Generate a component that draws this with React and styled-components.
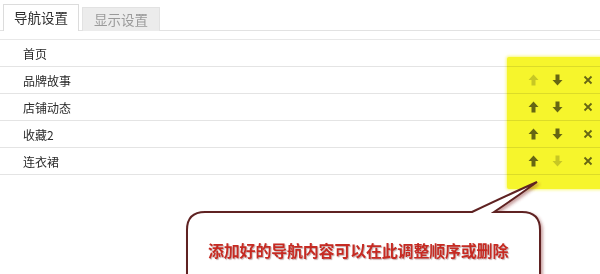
import styled, { createGlobalStyle } from "styled-components";

const GlobalStyle = createGlobalStyle`
  body {
    margin: 0;
    background: #fff;
    font-family: "Noto Sans CJK SC", "Noto Sans", sans-serif;
  }
`;

const Page = styled.div`
  position: relative;
  width: 600px;
  height: 274px;
  overflow: hidden;
  background: #fff;
`;

const TabBar = styled.div`
  display: flex;
  align-items: flex-end;
  gap: 3px;
  height: 30px;
  padding-left: 3px;
  border-bottom: 1px solid #e2e2e2;
`;

const Tab = styled.div`
  width: ${(p) => (p.$active ? "76px" : "78px")};
  height: ${(p) => (p.$active ? "27px" : "24px")};
  box-sizing: border-box;
  display: flex;
  align-items: center;
  justify-content: center;
  font-size: 13.5px;
  color: ${(p) => (p.$active ? "#2e2e2e" : "#9a9a9a")};
  background: ${(p) => (p.$active ? "#fff" : "#ececec")};
  border: 1px solid ${(p) => (p.$active ? "#dcdcdc" : "#e2e2e2")};
  border-bottom: none;
  margin-bottom: -1px;
  padding-bottom: 2px;
`;

const SubLine = styled.div`
  height: 1px;
  margin-top: 8px;
  background: #e8e8e8;
`;

const List = styled.div`
  display: flex;
  flex-direction: column;
`;

const Row = styled.div`
  display: flex;
  align-items: center;
  height: 26px;
  border-bottom: 1px solid #e4e4e4;
  font-size: 12px;
  color: #2a2a2a;
`;

const Label = styled.div`
  flex: 1;
  padding-left: 23px;
`;

const Actions = styled.div`
  display: grid;
  grid-template-columns: 24px 24px 31px;
  justify-items: center;
  align-items: center;
`;

const Icon = styled.svg`
  width: ${(p) => p.$w || 11}px;
  height: 12px;
  fill: ${(p) => (p.$faded ? "#cfcfcf" : "#6a6a6a")};
  stroke: ${(p) => (p.$faded ? "#cfcfcf" : "#6a6a6a")};
`;

const CloseIcon = styled(Icon)`
  justify-self: end;
  margin-right: 7px;
`;

const Highlight = styled.div`
  position: absolute;
  left: 507px;
  top: 57px;
  width: 100px;
  height: 132px;
  background: #f6f52c;
  mix-blend-mode: multiply;
  box-shadow: 0 0 3px 1px rgba(246, 245, 44, 0.6);
  border-radius: 2px;
`;

const Bubble = styled.div`
  position: absolute;
  left: 180px;
  top: 176px;
  width: 372px;
  height: 110px;
`;

const BubbleShape = styled.svg`
  position: absolute;
  inset: 0;
  overflow: visible;
`;

const BubbleText = styled.div`
  position: relative;
  padding: 62px 0 0 28px;
  font-size: 16px;
  font-weight: 700;
  color: #c62a22;
  letter-spacing: -0.2px;
  text-shadow: 1px 1px 1px rgba(90, 20, 20, 0.35);
  white-space: nowrap;
`;

const Up = ({ faded }) => (
  <Icon viewBox="0 0 11 12" $faded={faded}>
    <path d="M5.5 0.5 L10.5 6 L7.5 6 L7.5 11.5 L3.5 11.5 L3.5 6 L0.5 6 Z" stroke="none" />
  </Icon>
);

const Down = ({ faded }) => (
  <Icon viewBox="0 0 11 12" $faded={faded}>
    <path d="M5.5 11.5 L10.5 6 L7.5 6 L7.5 0.5 L3.5 0.5 L3.5 6 L0.5 6 Z" stroke="none" />
  </Icon>
);

const Close = () => (
  <CloseIcon viewBox="0 0 10 10" $w={10}>
    <path d="M1.5 1.5 L8.5 8.5 M8.5 1.5 L1.5 8.5" strokeWidth="1.8" fill="none" />
  </CloseIcon>
);

const items = ["品牌故事", "店铺动态", "收藏2", "连衣裙"];

export default function App() {
  return (
    <Page>
      <GlobalStyle />
      <TabBar>
        <Tab $active>导航设置</Tab>
        <Tab>显示设置</Tab>
      </TabBar>
      <SubLine />
      <List>
        <Row>
          <Label>首页</Label>
        </Row>
        {items.map((name, i) => (
          <Row key={name}>
            <Label>{name}</Label>
            <Actions>
              <Up faded={i === 0} />
              <Down faded={i === items.length - 1} />
              <Close />
            </Actions>
          </Row>
        ))}
      </List>
      <Highlight />
      <Bubble>
        <BubbleShape width="372" height="110" viewBox="0 0 372 110">
          <defs>
            <filter id="sh" x="-10%" y="-20%" width="120%" height="140%">
              <feDropShadow dx="2" dy="2" stdDeviation="1.5" floodColor="#8a3030" floodOpacity="0.45" />
            </filter>
          </defs>
          <path
            d="M7 130 L7 54 Q7 36 25 36 L292 36 Q330 18 357 6 Q335 22 314 36 L342 36 Q360 36 360 54 L360 130"
            fill="#fff"
            stroke="#5e2222"
            strokeWidth="2"
            filter="url(#sh)"
          />
        </BubbleShape>
        <BubbleText>添加好的导航内容可以在此调整顺序或删除</BubbleText>
      </Bubble>
    </Page>
  );
}
